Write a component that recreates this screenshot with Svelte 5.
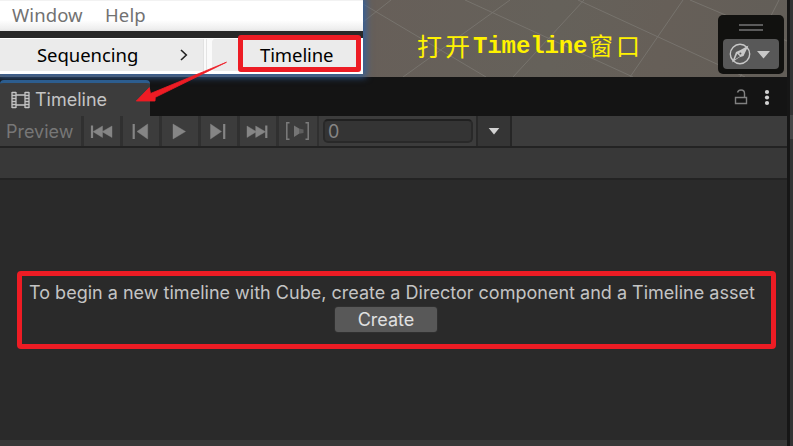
<script>
  const transport = [
    { label: 'First frame', bar: 'M3 2.5V15', tri: ['M13.5 3V14.5L4 8.7Z', 'M23 3V14.5L13 8.7Z'] },
    { label: 'Previous frame', bar: 'M5.7 1V16', tri: ['M19.7 1V16L9 8.5Z'] },
    { label: 'Play', bar: '', tri: ['M6 1V16L18.5 8.5Z'] },
    { label: 'Next frame', bar: 'M18.2 1V16', tri: ['M4.5 1V16L15.5 8.5Z'] },
    { label: 'Last frame', bar: 'M21.3 2.5V15', tri: ['M2 3V14.5L11.5 8.7Z', 'M10.7 3V14.5L20.5 8.7Z'] }
  ];
</script>

<div class="app">
  <main>
    <div class="top">
      <section class="menus">
        <nav class="menubar"><span class="window">Window</span><span class="help">Help</span></nav>
        <div class="flyout">
          <div class="item parent">
            <span class="seq">Sequencing</span>
            <svg width="8" height="12" viewBox="0 0 8 12"><path d="M1 1L6.3 6L1 11" fill="none" stroke="#222" stroke-width="1.6" /></svg>
          </div>
          <div class="gap"></div>
          <div class="item child"><span class="tl">Timeline</span></div>
        </div>
      </section>
      <section class="scene">
        <svg class="grid" width="424" height="77" viewBox="363 0 424 77">
          <g fill="none" stroke="#77736d" stroke-width="1">
            <path d="M363 22L391 0M363 4L486 77M403 77L510 0M465 0L633 77M513 77L584 0M578 0L745 77M630 77L683 0M690 0L787 41M740 77L779 0" />
          </g>
        </svg>
        <span class="note"><span class="cjk">打开</span><span class="mono">Timeline</span><span class="cjk end">窗口</span></span>
        <div class="tool">
          <div class="grip"></div>
          <div class="compass">
            <svg width="56" height="30" viewBox="0 0 56 30">
              <circle cx="17" cy="15" r="9.7" fill="none" stroke="#c8c8c8" stroke-width="1.4" />
              <path d="M25.5 6.5L20.5 17L16 18.5L9 23.5L13 13L17.5 11Z" fill="#c8c8c8" />
              <path d="M11.8 20.5L14.2 14.8L17 17.2Z" fill="#585858" />
              <circle cx="17.4" cy="14.6" r="1" fill="#585858" />
              <path d="M34 12H47L40.5 19.5Z" fill="#c8c8c8" />
            </svg>
          </div>
        </div>
      </section>
    </div>

    <header class="tabs">
      <div class="tab">
        <svg width="19" height="18" viewBox="0 0 19 18">
          <g fill="none" stroke="#c4c4c4">
            <path d="M1 1V17M5 1V17M14 1V17M18 1V17" stroke-width="1.3" />
            <path d="M1 1.5H5M1 4.5H5M1 7.5H5M1 10.5H5M1 13.5H5M1 16.5H5M14 1.5H18M14 4.5H18M14 7.5H18M14 10.5H18M14 13.5H18M14 16.5H18M5 4H14M5 14H14" stroke-width="1.4" />
          </g>
        </svg>
        <span>Timeline</span>
      </div>
      <div class="actions">
        <svg width="36" height="18" viewBox="0 0 36 18">
          <path d="M1.5 8.5H12.5V14.5H1.5ZM10.5 8V4.5Q10.5 1 7 1Q4.2 1 3.5 3.5" fill="none" stroke="#808080" stroke-width="1.4" />
          <g fill="#d2d2d2"><circle cx="33" cy="3" r="2.1" /><circle cx="33" cy="8.5" r="2.1" /><circle cx="33" cy="14" r="2.1" /></g>
        </svg>
      </div>
    </header>

    <div class="toolbar">
      <div class="preview">Preview</div>
      {#each transport as b}
        <button class="step" aria-label={b.label}>
          <svg width="26" height="17" viewBox="0 0 26 17">
            <path d={b.bar} stroke="#858585" stroke-width="2.2" />
            {#each b.tri as t}<path d={t} fill="#858585" stroke="#858585" stroke-width=".4" />{/each}
          </svg>
        </button>
      {/each}
      <button class="step range" aria-label="Play range">
        <svg width="26" height="20" viewBox="0 0 26 20">
          <path d="M4.5 1.8H1.8V18.2H4.5M20.5 1.8H23.2V18.2H20.5" fill="none" stroke="#7c7c7c" stroke-width="1.5" />
          <path d="M9 4.5V16L14 12.8V7.5Z" fill="#757575" /><path d="M14 7.5V12.8L18.5 12V8.5Z" fill="#5e5e5e" />
        </svg>
      </button>
      <div class="fieldwrap"><div class="field">0</div></div>
      <button class="drop" aria-label="Select"><svg width="12" height="8" viewBox="0 0 12 8"><path d="M.7 1H11.3L6 7.5Z" fill="#d2d2d2" /></svg></button>
    </div>
    <div class="ruler"></div>

    <section class="body">
      <div class="callout">
        <p>To begin a new timeline with Cube, create a Director component and a Timeline asset</p>
        <button class="create">Create</button>
      </div>
    </section>
    <footer></footer>
  </main>
  <aside><div class="thumb"></div></aside>

  <div class="mark"></div>
  <svg class="arrow" width="96" height="46" viewBox="133 60 96 46">
    <path d="M226.5 62.2L155.3 97.3L155 101L136.3 101L149.3 87.6L150.5 93.5Z" fill="#ed1c24" stroke="#ed1c24" stroke-width=".8" stroke-linejoin="round" />
  </svg>
</div>

<style>
  :global(body) { margin: 0; background: #2a2a2a; }
  .app { position: relative; display: flex; width: 793px; height: 446px; overflow: hidden; font-family: Inter, sans-serif; color: #c4c4c4; }
  .app * { box-sizing: border-box; }
  button { border: 0; margin: 0; padding: 0; font: inherit; color: inherit; }
  svg { display: block; }
  main { width: 787px; display: flex; flex-direction: column; }
  aside { width: 6px; border-left: 3px solid #161616; background: #333; padding-top: 115px; }
  .thumb { height: 24px; background: #474747; }
  .top { display: flex; height: 77px; background: #665f58; }
  .menus { width: 363px; height: 74px; box-shadow: 0 0 7px 3px #315f9c; position: relative; z-index: 1; display: flex; flex-direction: column; font-family: "Noto Sans", "Open Sans", sans-serif; }
  .menubar { height: 31px; display: flex; align-items: center; padding-bottom: 2px; background: linear-gradient(#f2f2f2 1px, #fff 1px, #fff 20px, #eee 29px, #e4e4e4); color: #727272; font-size: 18.5px; white-space: nowrap; }
  .window { width: 105px; padding-left: 12px; letter-spacing: .1px; }
  .help { letter-spacing: .15px; }
  .flyout { height: 43px; display: flex; align-items: stretch; border-top: 7px solid #292929; padding: 1px 0 3px; background: #fff; color: #000; font-size: 18.5px; white-space: nowrap; }
  .item { display: flex; align-items: center; background: #ebebeb; line-height: 30px; padding-bottom: 1px; }
  .parent { width: 203px; padding-left: 37px; }
  .seq { width: 143px; letter-spacing: -.05px; }
  .gap { width: 9px; background: linear-gradient(90deg, #e2e2e2 1px, #fafafa 1px, #fafafa 3px, #e4e4e4 3px, #e4e4e4 4px, #fafafa 4px); }
  .child { width: 148px; padding-left: 48px; border-radius: 3px; letter-spacing: -.1px; }
  .scene { width: 424px; height: 77px; position: relative; overflow: hidden; background: linear-gradient(100deg, #675f59, #65615a 45%, #665f58 70%, #625e58); }
  .grid { position: absolute; inset: 0; }
  .note { position: absolute; left: 54px; top: 27px; display: flex; align-items: center; height: 36px; color: #fff200; white-space: nowrap; }
  .cjk { width: 56px; font: 400 25px/36px "Noto Sans CJK SC", sans-serif; letter-spacing: 3px; }
  .mono { width: 115px; padding-top: 3px; font: bold 24px/36px "Liberation Mono", monospace; letter-spacing: -.1px; }
  .end { font-size: 24px; padding-left: 1px; }
  .tool { position: absolute; left: 355px; top: 15px; width: 66px; height: 59px; border-radius: 5px; background: #11110f; padding: 9px 5px 0; display: flex; flex-direction: column; align-items: center; }
  .grip { width: 24px; height: 7px; border: solid #5b5b5b; border-width: 2px 0; margin-bottom: 8px; }
  .compass { width: 56px; height: 30px; border-radius: 4px; background: #585858; }
  .tabs { height: 39px; background: #141414; display: flex; justify-content: space-between; align-items: flex-end; }
  .tab { width: 150px; height: 36px; border-top: 3px solid #2c5d8d; border-radius: 4px 4px 0 0; background: #3c3c3c; display: flex; align-items: center; padding-left: 11px; gap: 5px; font-size: 18px; }
  .actions { padding: 0 17px 9px 0; }
  .toolbar { height: 32px; border-bottom: 2px solid #232323; background: #3c3c3c; display: flex; }
  .preview { width: 84px; border-right: 3px solid #303030; padding-left: 6px; font-size: 18px; line-height: 31px; color: #777; }
  .step { width: 39px; border-right: 3px solid #303030; background: none; display: flex; align-items: center; justify-content: center; }
  .range { width: 40px; border-right-width: 2px; }
  .fieldwrap { width: 159px; padding: 3px 3px 3px 4px; border-right: 2px solid #292929; }
  .field { width: 150px; height: 24px; border: 2px solid #292929; border-top-color: #202020; border-radius: 5px; background: #343434; padding-left: 3px; font-size: 18px; line-height: 21px; color: #858585; }
  .drop { width: 34px; border-right: 2px solid #262626; background: #353535; display: flex; align-items: center; justify-content: center; }
  .ruler { height: 32px; background: #383838; border-bottom: 2px solid #232323; }
  .body { height: 260px; background: #2a2a2a; padding: 91px 0 0 17px; }
  .callout { width: 759px; height: 78px; border: 5px solid #ed1c24; border-radius: 4px; display: flex; flex-direction: column; align-items: center; padding-top: 4px; }
  .callout p { margin: 0; width: 749px; padding-left: 7px; font-size: 18px; line-height: 25px; letter-spacing: .01px; white-space: nowrap; }
  .create { width: 102px; height: 25px; margin: 2px 21px 0 0; border-radius: 3px; background: #585858; box-shadow: 0 0 0 1px #303030; color: #e0e0e0; font-size: 18px; line-height: 26px; }
  footer { height: 6px; background: #383838; }
  .mark { position: absolute; z-index: 2; left: 238px; top: 35px; width: 123px; height: 37px; border: 5px solid #ed1c24; border-radius: 3px; }
  .arrow { position: absolute; z-index: 2; left: 133px; top: 60px; }
</style>
